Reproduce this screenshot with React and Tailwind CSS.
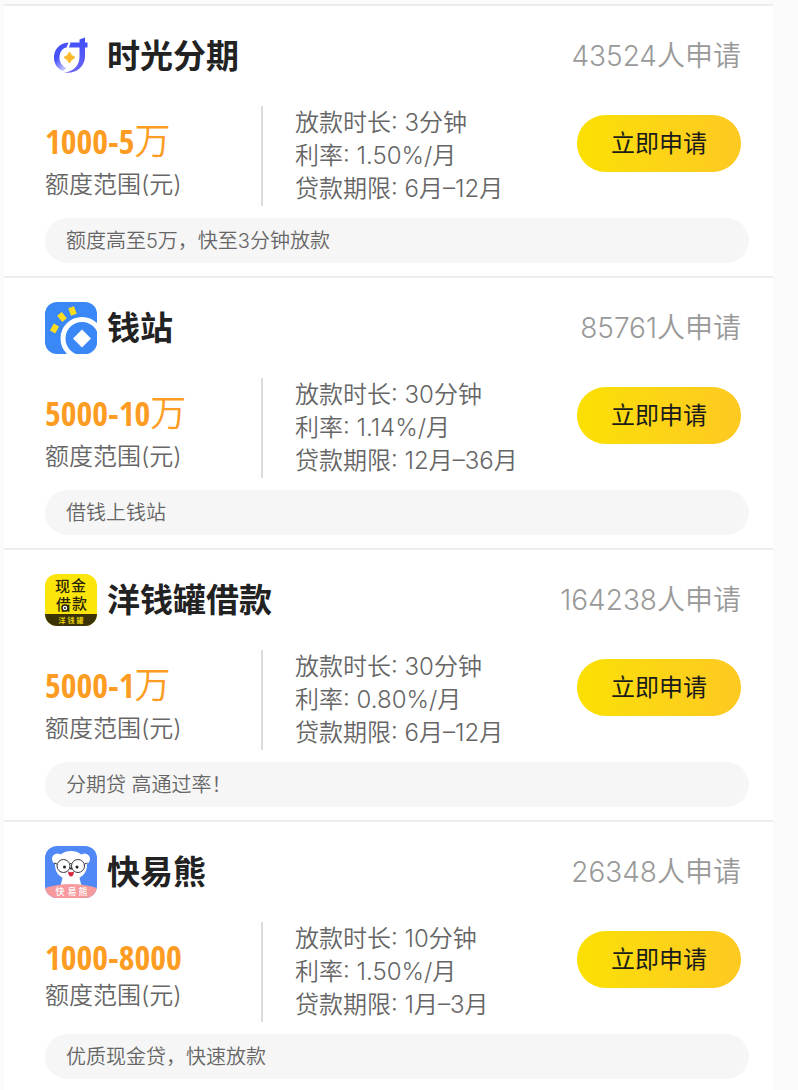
import React from 'react';

const loans = [
  {
    name: '时光分期',
    Icon: ShiguangIcon,
    applied: 43524,
    amount: '1000-5',
    unit: '万',
    time: '3分钟',
    rate: '1.50%/月',
    term: '6月–12月',
    note: '额度高至5万，快至3分钟放款',
  },
  {
    name: '钱站',
    Icon: QianzhanIcon,
    applied: 85761,
    amount: '5000-10',
    unit: '万',
    time: '30分钟',
    rate: '1.14%/月',
    term: '12月–36月',
    note: '借钱上钱站',
  },
  {
    name: '洋钱罐借款',
    Icon: YangqianguanIcon,
    applied: 164238,
    amount: '5000-1',
    unit: '万',
    time: '30分钟',
    rate: '0.80%/月',
    term: '6月–12月',
    note: '分期贷 高通过率！',
  },
  {
    name: '快易熊',
    Icon: KuaiyixiongIcon,
    applied: 26348,
    amount: '1000-8000',
    unit: '',
    time: '10分钟',
    rate: '1.50%/月',
    term: '1月–3月',
    note: '优质现金贷，快速放款',
  },
];

function ShiguangIcon() {
  return (
    <svg viewBox="0 0 52 52" className="size-[52px] shrink-0" aria-hidden="true">
      <defs>
        <linearGradient id="sg" x1="0" y1="0" x2="0" y2="1">
          <stop offset="0" stopColor="#3d4dfb" />
          <stop offset="1" stopColor="#6a63f3" />
        </linearGradient>
        <linearGradient id="sg-ring" x1="0" y1="0" x2="0.6" y2="1">
          <stop offset="0.5" stopColor="#4650fb" />
          <stop offset="1" stopColor="#c9c6fb" />
        </linearGradient>
      </defs>
      <path
        d="M23.500 12.500 C14 13 9 20 9 27.500 C9 34 12.500 39 18 41 L21.500 38 C17 36 14.500 32 14.500 27.500 C14.500 22 17.500 18 21.500 17.500 Z"
        fill="url(#sg-ring)"
      />
      <path
        d="M25.500 12.500 H34.500 V9.500 L40 7.500 V12.500 H42.500 V17.500 H40 V27 C39.500 37 31 44 19.500 42.500 C28.500 41.500 34.500 35.500 34.500 27 V17.500 H24 Z"
        fill="url(#sg)"
      />
      <path d="M24.500 22 Q26 26 30 27.500 Q26 29 24.500 33 Q23 29 19 27.500 Q23 26 24.500 22 Z" fill="#fdb92b" stroke="#fdb92b" />
    </svg>
  );
}

function QianzhanIcon() {
  return (
    <svg viewBox="0 0 52 52" className="size-[52px] shrink-0 rounded-xl" aria-hidden="true">
      <rect width="52" height="52" fill="#3a87f7" />
      <circle cx="37" cy="36.500" r="19" fill="#3a87f7" stroke="#fff" strokeWidth="5" />
      <path d="M37 27.500 L46 36.500 L37 45.500 L28 36.500 Z" fill="#fff" />
      {/* sun rays, pointing away from the coin */}
      <g fill="#fcdc1c">
        <rect x="-3" y="-4" width="6" height="8" transform="translate(9.500 26.500) rotate(28)" />
        <rect x="-3" y="-4" width="6" height="8" transform="translate(17 15) rotate(-40)" />
        <rect x="-3" y="-4" width="6" height="8" transform="translate(27.500 9) rotate(-20)" />
      </g>
    </svg>
  );
}

function YangqianguanIcon() {
  return (
    <svg viewBox="0 0 52 52" className="size-[52px] shrink-0 rounded-xl" aria-hidden="true">
      <rect width="52" height="52" fill="#fbe50a" />
      <rect y="40" width="52" height="12" fill="#3b3206" />
      <g fill="#2b2506" fontSize="15" fontWeight="500">
        <text x="10" y="18">现</text>
        <text x="26" y="17">金</text>
        <text x="11" y="36">借</text>
        <text x="27" y="35">款</text>
      </g>
      <circle cx="20" cy="34" r="3" fill="#fff" stroke="#2b2506" strokeWidth="1.500" />
      <circle cx="20" cy="34" r="1" fill="#2b2506" />
      <g fill="#fbe50a" fontSize="7" fontWeight="500" textAnchor="middle">
        <text x="17" y="49">洋</text>
        <text x="26" y="49">钱</text>
        <text x="35" y="49">罐</text>
      </g>
    </svg>
  );
}

function KuaiyixiongIcon() {
  return (
    <svg viewBox="0 0 52 52" className="size-[52px] shrink-0 rounded-xl" aria-hidden="true">
      <rect width="52" height="52" fill="#5088f6" />
      <g fill="#fff">
        <circle cx="12.500" cy="13" r="5.500" />
        <circle cx="39.500" cy="13" r="5.500" />
        <ellipse cx="26" cy="19.500" rx="16" ry="14.500" />
        <path d="M18 30 H34 L37 42 H15 Z" />
      </g>
      <g fill="none" stroke="#3a3a44" strokeWidth="1">
        <circle cx="18.500" cy="20" r="6.500" />
        <circle cx="33" cy="20" r="6.500" />
        <path d="M12 18 L9 17 M39.500 18 L42.500 17 M24.500 18 Q26 17 27 18" />
      </g>
      <g fill="#22222a">
        <circle cx="19.500" cy="21" r="1.500" />
        <circle cx="32" cy="21" r="1.500" />
        <ellipse cx="26" cy="22.500" rx="1.500" ry="1" />
      </g>
      <path d="M23 25.500 Q26 27 29 25.500 Q28.500 30.500 26 30.500 Q23.500 30.500 23 25.500 Z" fill="#d8273a" />
      <path d="M0 42 Q26 34 52 42 V52 H0 Z" fill="#f79a9d" />
      <g fill="#fff" fontSize="9" fontWeight="500" textAnchor="middle">
        <text x="15" y="49">快</text>
        <text x="27" y="49">易</text>
        <text x="38" y="49">熊</text>
      </g>
    </svg>
  );
}

function LoanCard({ loan }) {
  const { Icon } = loan;

  return (
    <li className="border-t-2 border-[#ededed] bg-white pt-6 pr-6 pb-[13px] pl-[41px]">
      {/* HEADER */}
      <div className="flex items-center pr-2">
        <Icon />
        <h2 className="ml-[10px] text-[33px] leading-[52px] font-bold text-[#222]">{loan.name}</h2>
        <span className="ml-auto text-[28px] leading-[52px] font-[350] text-[#999]">{loan.applied}人申请</span>
      </div>

      {/* BODY */}
      <div className="mt-6 flex items-center pr-2">
        <div className="h-[100px] w-[218px] shrink-0 border-r-2 border-[#dcdcdc] pt-[13px]">
          <div className="flex items-start text-[#fd9c22]">
            <span className="font-['Open_Sans_Condensed','Noto_Sans_ExtraCondensed','Roboto_Condensed',sans-serif] text-[34px] leading-[44px] font-semibold">
              {loan.amount}
            </span>
            {loan.unit && <span className="pb-1 text-[36px] leading-[45px] font-[350]">{loan.unit}</span>}
          </div>
          <p className="text-[24px] leading-[34px] font-[350] text-[#666]">额度范围(元)</p>
        </div>

        <div className="mb-px ml-8 text-[24px] leading-[33px] font-[350] whitespace-nowrap text-[#666]">
          <p>放款时长: {loan.time}</p>
          <p>利率: {loan.rate}</p>
          <p>贷款期限: {loan.term}</p>
        </div>

        <button
          type="button"
          className="mb-[25px] ml-auto h-[57px] w-[164px] shrink-0 rounded-full bg-linear-to-r from-[#fbe000] to-[#fdc921] text-[24px] text-[#1a1a1a]"
        >
          立即申请
        </button>
      </div>

      {/* NOTE */}
      <p className="mt-3 rounded-full bg-[#f6f6f6] px-[21px] pt-[2px] text-[20px] leading-[43px] font-[350] text-[#666]">
        {loan.note}
      </p>
    </li>
  );
}

export default function App() {
  return (
    <main className="min-h-screen bg-[#fbfbfb] pt-1 pr-[25px] pl-1 font-['Inter','Noto_Sans_CJK_SC',sans-serif]">
      <ul>
        {loans.map((loan) => (
          <LoanCard key={loan.name} loan={loan} />
        ))}
      </ul>
    </main>
  );
}
